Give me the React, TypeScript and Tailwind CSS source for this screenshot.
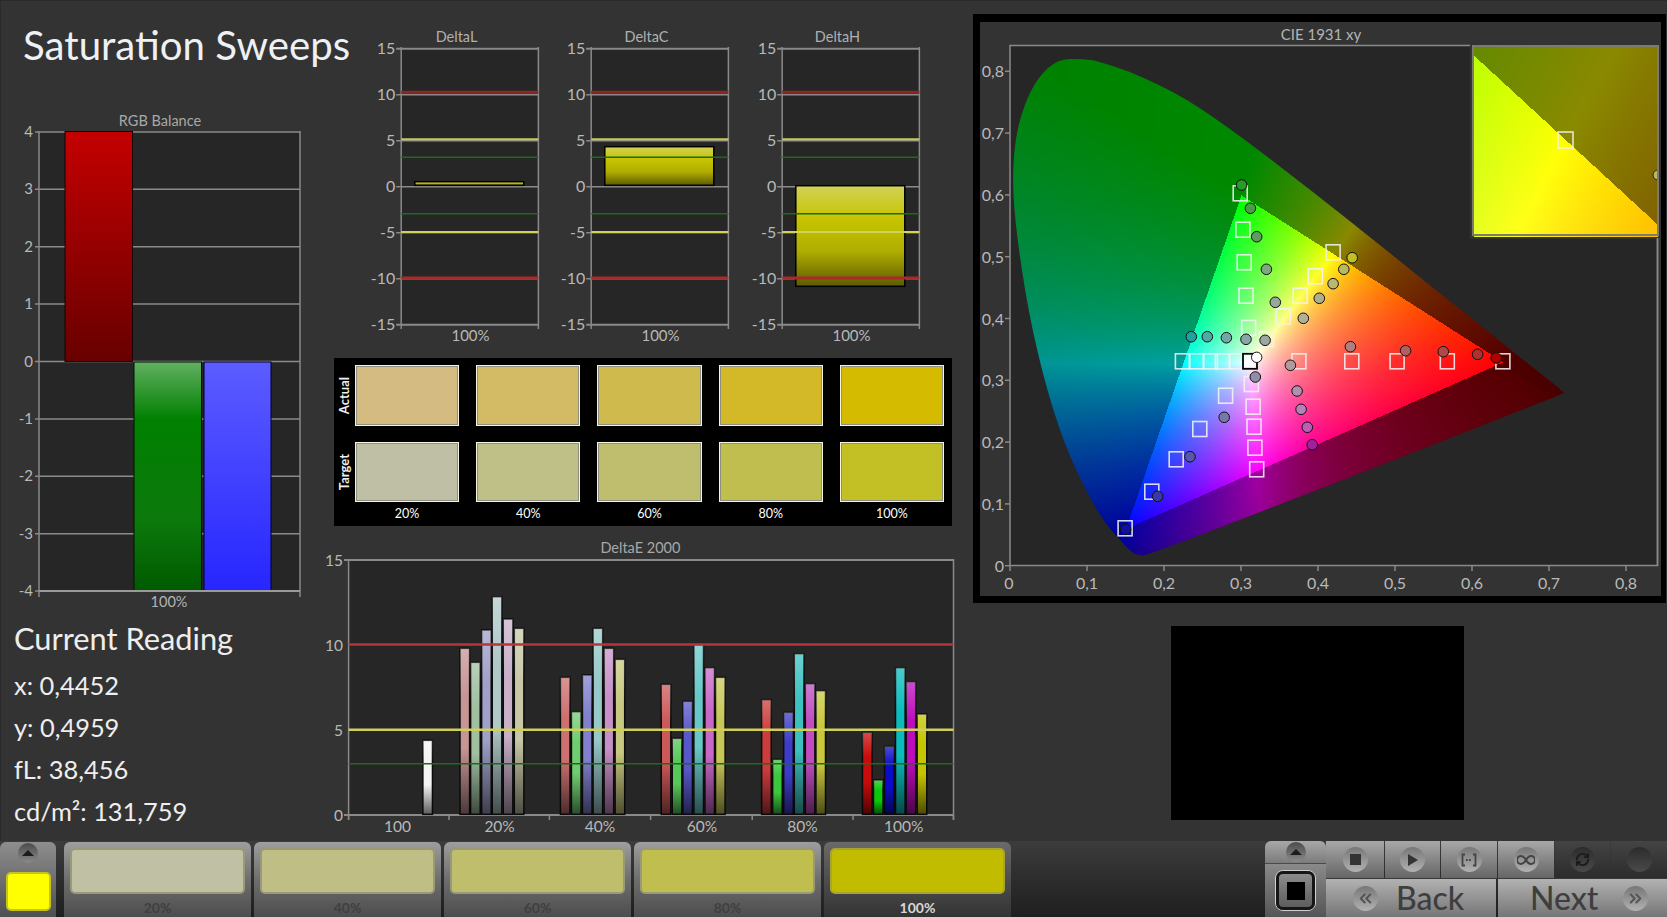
import React, { useEffect, useRef } from "react";
import { ChevronsLeft, ChevronsRight, RefreshCw } from "lucide-react";

const GRID = "#8a8a8a";
const LABEL = "#b9b9b9";

function Shade({ id }: { id: string }) {
  return (
    <linearGradient id={id} x1="0" y1="0" x2="0" y2="1">
      <stop offset="0" stopColor="#fff" stopOpacity="0.26" />
      <stop offset="0.3" stopColor="#fff" stopOpacity="0" />
      <stop offset="0.6" stopColor="#000" stopOpacity="0" />
      <stop offset="1" stopColor="#000" stopOpacity="0.62" />
    </linearGradient>
  );
}

function RgbChart() {
  const ys = [4, 3, 2, 1, 0, -1, -2, -3, -4];
  const yOf = (v: number) => 361.5 - v * 57.4;
  return (
    <svg className="block shrink-0" width="334" height="498" viewBox="0 112 334 498">
      <defs>
        <linearGradient id="rgbR" x1="0" y1="0" x2="0" y2="1">
          <stop offset="0" stopColor="#c40000" />
          <stop offset="1" stopColor="#680000" />
        </linearGradient>
        <linearGradient id="rgbG" x1="0" y1="0" x2="0" y2="1">
          <stop offset="0" stopColor="#62b062" />
          <stop offset="0.25" stopColor="#008000" />
          <stop offset="0.7" stopColor="#0c780c" />
          <stop offset="1" stopColor="#005a00" />
        </linearGradient>
        <linearGradient id="rgbB" x1="0" y1="0" x2="0" y2="1">
          <stop offset="0" stopColor="#5c5cff" />
          <stop offset="1" stopColor="#2626ff" />
        </linearGradient>
      </defs>
      <text x="160" y="125.5" textAnchor="middle" fontSize="14.5" fill="#a8a8a8">RGB Balance</text>
      <rect x="39" y="131.5" width="261" height="459.5" fill="#262626" />
      {ys.map((v) => (
        <g key={v}>
          <line x1="35" x2="300" y1={yOf(v)} y2={yOf(v)} stroke={GRID} strokeWidth="1.5" />
          <text x="33" y={yOf(v) + 5} textAnchor="end" fontSize="15" fill={LABEL}>{v}</text>
        </g>
      ))}
      <line x1="39" x2="39" y1="131" y2="597" stroke={GRID} strokeWidth="1.5" />
      <line x1="300" x2="300" y1="131" y2="597" stroke={GRID} strokeWidth="1.5" />
      <rect x="65" y="131.5" width="67.5" height="230" fill="url(#rgbR)" stroke="#1a0000" />
      <rect x="134" y="362" width="67.5" height="229" fill="url(#rgbG)" stroke="#001000" />
      <rect x="204" y="362" width="67" height="229" fill="url(#rgbB)" stroke="#000020" />
      <line x1="39" x2="300" y1="591" y2="591" stroke="#9a9a9a" strokeWidth="2" />
      <text x="169" y="607" textAnchor="middle" fontSize="14.5" fill="#b4b4b4">100%</text>
    </svg>
  );
}

function DeltaChart({ title, bar, id }: { title: string; bar: [number, number]; id: string }) {
  const L = 46.2;
  const R = 183.4;
  const ys = [15, 10, 5, 0, -5, -10, -15];
  const yOf = (v: number) => 186.7 - v * 9.2;
  return (
    <svg className="block shrink-0" width="190.4" height="325" viewBox="0 25 190.4 325">
      <defs>
        <linearGradient id={id} x1="0" y1="0" x2="0" y2="1">
          <stop offset="0" stopColor="#d2d258" />
          <stop offset="0.33" stopColor="#c6c400" />
          <stop offset="0.65" stopColor="#b0ae00" />
          <stop offset="1" stopColor="#5c5a00" />
        </linearGradient>
      </defs>
      <text x="101.5" y="42.5" textAnchor="middle" fontSize="14.5" fill="#b0b0b0">{title}</text>
      <rect x={L} y="47.7" width={R - L} height="276" fill="#262626" />
      {ys.map((v) => (
        <g key={v}>
          <line x1={L - 5} x2={R} y1={yOf(v)} y2={yOf(v)} stroke={GRID} strokeWidth={v === 15 || v === -15 ? 2 : 1.5} />
          <text x={L - 6} y={yOf(v) + 5} textAnchor="end" fontSize="16" fill={LABEL}>{v}</text>
        </g>
      ))}
      <line x1={L} x2={L} y1="47" y2="329" stroke={GRID} strokeWidth="1.5" />
      <line x1={R} x2={R} y1="47" y2="329" stroke={GRID} strokeWidth="1.5" />
      <rect x={L + 13.6} y={bar[0]} width="109" height={bar[1] - bar[0]} fill={`url(#${id})`} stroke="#000" strokeWidth="1.5" />
      <line x1={L} x2={R} y1="92.3" y2="92.3" stroke="#8f2626" strokeWidth="3" />
      <line x1={L} x2={R} y1="278" y2="278" stroke="#a82a2a" strokeWidth="3" />
      <line x1={L} x2={R} y1="139.3" y2="139.3" stroke="#c8c85a" strokeWidth="2" />
      <line x1={L} x2={R} y1="232" y2="232" stroke="#d2d25a" strokeWidth="2" />
      <line x1={L} x2={R} y1="157.3" y2="157.3" stroke="#1d6a1d" strokeWidth="1.5" />
      <line x1={L} x2={R} y1="213.7" y2="213.7" stroke="#1d6a1d" strokeWidth="1.5" />
      <text x="115.5" y="341.5" textAnchor="middle" fontSize="15" fill="#b9b9b9">100%</text>
    </svg>
  );
}

const actual = ["#d4bb82", "#d3bb66", "#cfba4e", "#d3b928", "#d4bb00"];
const target = ["#bfbfa5", "#bfbf88", "#bfbe6e", "#bfbe4e", "#c2c024"];
const pcts = ["20%", "40%", "60%", "80%", "100%"];

function SwatchCell({ c }: { c: string }) {
  return (
    <div className="h-full border border-[#f4f4e0] bg-[#8f8f80] p-px">
      <div className="h-full w-full" style={{ backgroundColor: c }} />
    </div>
  );
}

function SwatchPanel() {
  return (
    <div className="mt-2 flex h-[168px] w-[618px] bg-black pt-[7px]">
      <div className="flex w-[21px] shrink-0 flex-col text-[13px] font-bold text-[#eeeeee]">
        <div className="flex h-[61px] items-center justify-center">
          <span className="rotate-180 [writing-mode:vertical-rl]">Actual</span>
        </div>
        <div className="mt-4 flex h-[60px] items-center justify-center">
          <span className="rotate-180 [writing-mode:vertical-rl]">Target</span>
        </div>
      </div>
      <div className="grid w-[589px] grid-cols-5 grid-rows-[61px_60px_auto] gap-x-[17px] gap-y-4">
        {actual.map((c) => <SwatchCell key={c} c={c} />)}
        {target.map((c) => <SwatchCell key={c} c={c} />)}
        {pcts.map((p) => (
          <div key={p} className="-mt-[13px] text-center text-[12.5px] text-white">{p}</div>
        ))}
      </div>
    </div>
  );
}

const groups: { lab: string; lx: number; xs: number[]; tops: number[]; cols: string[] }[] = [
  { lab: "100", lx: 190, xs: [252], tops: [601], cols: ["#f4f4f4"] },
  { lab: "20%", lx: 440, xs: [343, 369, 396, 422, 449, 476], tops: [325, 367, 270, 170, 237, 265], cols: ["#c89494", "#a0c0a0", "#a0a0c8", "#b0c8c8", "#c8b0c8", "#c8c8a8"] },
  { lab: "40%", lx: 686, xs: [589, 616, 643, 669, 696, 723], tops: [412, 515, 405, 265, 325, 358], cols: ["#cc7070", "#70cc70", "#8080cc", "#98c8c8", "#c890c8", "#c8c880"] },
  { lab: "60%", lx: 936, xs: [836, 863, 889, 916, 943, 969], tops: [433, 595, 484, 314, 383, 412], cols: ["#cc5858", "#58c858", "#5858c8", "#68c8c8", "#c868c8", "#c8c858"] },
  { lab: "80%", lx: 1182, xs: [1082, 1109, 1136, 1162, 1189, 1215], tops: [479, 658, 517, 341, 431, 452], cols: ["#cc3c3c", "#3cc83c", "#3c3cc8", "#3cc0c0", "#c04cc0", "#c8c83c"] },
  { lab: "100%", lx: 1430, xs: [1329, 1356, 1383, 1410, 1436, 1463], tops: [577, 720, 619, 383, 425, 522], cols: ["#c80c0c", "#0cc80c", "#0c0cc8", "#0cbcbc", "#bc0cbc", "#c4c400"] },
];
const zx = (v: number) => 320 + v / 2.45;
const zy = (v: number) => 540 + v / 3;

function DeltaEChart() {
  const ys = [15, 10, 5, 0];
  const yOf = (v: number) => 815 - v * 17;
  const ticks = [70, 316, 562, 810, 1059, 1306, 1552];
  return (
    <svg className="mt-2 -ml-[14px] block shrink-0" width="653" height="307" viewBox="320 534 653 307">
      <defs><Shade id="deShade" /></defs>
      <text x="640.4" y="552.5" textAnchor="middle" fontSize="14.5" fill="#a8a8a8">DeltaE 2000</text>
      <rect x="348.6" y="559.5" width="605" height="255" fill="#262626" />
      {ys.map((v) => (
        <g key={v}>
          <line x1="344" x2="953.5" y1={yOf(v)} y2={yOf(v)} stroke={v === 10 || v === 5 ? "#26262600" : GRID} strokeWidth="2" />
          <text x="343" y={yOf(v) + 5.5} textAnchor="end" fontSize="15.5" fill={LABEL}>{v}</text>
        </g>
      ))}
      <line x1="348.6" x2="348.6" y1="559" y2="820" stroke={GRID} strokeWidth="1.5" />
      <line x1="953.5" x2="953.5" y1="559" y2="820" stroke={GRID} strokeWidth="1.5" />
      {ticks.map((t) => <line key={t} x1={zx(t)} x2={zx(t)} y1="815" y2="820" stroke={GRID} strokeWidth="1.5" />)}
      {groups.map((g) => (
        <g key={g.lab}>
          {g.xs.map((x, i) => (
            <g key={x}>
              <rect x={zx(x)} y={zy(g.tops[i])} width="9.6" height={zy(823) - zy(g.tops[i])} fill={g.cols[i]} stroke="#0c0c0c" strokeWidth="1.5" />
              <rect x={zx(x)} y={zy(g.tops[i])} width="9.6" height={zy(823) - zy(g.tops[i])} fill="url(#deShade)" />
            </g>
          ))}
          <text x={zx(g.lx)} y="831.5" textAnchor="middle" fontSize="15.5" fill={LABEL}>{g.lab}</text>
        </g>
      ))}
      <line x1="348.6" x2="953.5" y1="644.5" y2="644.5" stroke="#b8343a" strokeWidth="2.5" />
      <line x1="348.6" x2="953.5" y1="729.7" y2="729.7" stroke="#cfcf5a" strokeWidth="2.5" />
      <line x1="348.6" x2="953.5" y1="763.7" y2="763.7" stroke="#1d6a1d" strokeWidth="1.5" />
    </svg>
  );
}

const LOCUS: [number, number][] = [
  [0.182, 0.017], [0.165, 0.017], [0.156, 0.024], [0.144, 0.0407], [0.1241, 0.0678], [0.1096, 0.0968], [0.0913, 0.1397], [0.0687, 0.2037], [0.0454, 0.295], [0.0235, 0.4127], [0.0082, 0.5384],
  [0.003, 0.62], [0.0065, 0.69], [0.018, 0.745], [0.036, 0.79], [0.062, 0.82], [0.097, 0.82], [0.1142, 0.8162], [0.1547, 0.7999], [0.1929, 0.7786], [0.2296, 0.7543], [0.2658, 0.7243], [0.3016, 0.6923], [0.3373, 0.6589],
  [0.3731, 0.6245], [0.4087, 0.5896], [0.4441, 0.5547], [0.4788, 0.5202], [0.5125, 0.4866], [0.5448, 0.4544], [0.5752, 0.4242], [0.6029, 0.3965], [0.627, 0.3725], [0.6658, 0.334], [0.7, 0.3], [0.72, 0.28], [0.72, 0.28], [0.71, 0.274],
];

function chroma(x: number, y: number): [number, number, number] {
  const X = x / y;
  const Z = (1 - x - y) / y;
  let r = 3.2406 * X - 1.5372 - 0.4986 * Z;
  let g = -0.9689 * X + 1.8758 + 0.0415 * Z;
  let b = 0.0557 * X - 0.204 + 1.057 * Z;
  const minC = Math.min(r, g, b);
  const inside = minC >= 0;
  r = Math.max(r, 0);
  g = Math.max(g, 0);
  b = Math.max(b, 0);
  const m = Math.max(r, g, b) || 1;
  const gam = 0.88;
  let f = 1;
  if (!inside) {
    f = 0.54 + 0.09 * (b / m);
    f -= 0.12 * Math.min(1, Math.max(0, -minC * 0.18));
    if (r >= g && r >= b) {
      const ratio = Math.pow(Math.max(g, b) / r, 0.5);
      f -= 0.24 * (1 - ratio);
    }
  }
  return [Math.pow(r / m, gam) * 255 * f, Math.pow(g / m, gam) * 255 * f, Math.pow(b / m, gam) * 255 * f];
}

function paint(ref: HTMLCanvasElement | null, fx: (i: number) => number, fy: (j: number) => number, clip: boolean) {
  if (!ref) return;
  const w = ref.width;
  const h = ref.height;
  const off = document.createElement("canvas");
  off.width = w;
  off.height = h;
  const oc = off.getContext("2d")!;
  const data = oc.createImageData(w, h);
  for (let j = 0; j < h; j++) {
    for (let i = 0; i < w; i++) {
      const [r, g, b] = chroma(fx(i), Math.max(0.001, fy(j)));
      const k = (j * w + i) * 4;
      data.data[k] = r;
      data.data[k + 1] = g;
      data.data[k + 2] = b;
      data.data[k + 3] = 255;
    }
  }
  oc.putImageData(data, 0, 0);
  const ctx = ref.getContext("2d")!;
  ctx.save();
  if (clip) {
    const P = LOCUS.map(([x, y]) => [x * 770, 520.7 - y * 618]);
    ctx.beginPath();
    ctx.moveTo((P[0][0] + P[P.length - 1][0]) / 2, (P[0][1] + P[P.length - 1][1]) / 2);
    P.forEach((p, n) => {
      const q = P[(n + 1) % P.length];
      ctx.quadraticCurveTo(p[0], p[1], (p[0] + q[0]) / 2, (p[1] + q[1]) / 2);
    });
    ctx.closePath();
    ctx.clip();
  }
  ctx.drawImage(off, 0, 0);
  ctx.restore();
}

const SQ: [number, number][] = [
  [1240.2, 193.3], [1242.9, 229.7], [1244.2, 262.3], [1246, 295.7], [1248.7, 328],
  [1333.1, 252.3], [1315.3, 276.3], [1300.2, 295.7], [1283.3, 316.3], [1266.4, 339.3],
  [1182.4, 361.3], [1196.7, 361.3], [1210.4, 361.3], [1222.4, 361.3], [1236.7, 361.3],
  [1298.9, 361.3], [1351.8, 361.3], [1397.1, 361.3], [1447.3, 361.3], [1502.9, 361.3],
  [1251.3, 384], [1253.1, 406.7], [1254, 426.7], [1254.9, 447.7], [1256.7, 469.3],
  [1225.6, 395.7], [1199.8, 429], [1176.2, 459.3], [1151.8, 491.7], [1125.1, 528.3],
];
const CI: [number, number, string][] = [
  [1241.6, 185, "#2a9a2a"], [1250.4, 208.3, "#4a9a4a"], [1256.7, 236.7, "#609a60"], [1266.4, 269.3, "#80a880"], [1275.3, 302.3, "#98a898"],
  [1352.2, 257.7, "#c0c020"], [1343.8, 269.3, "#b8b860"], [1333.1, 283.7, "#b8b870"], [1319.3, 298.3, "#b0b088"], [1303.3, 318.3, "#b0b098"],
  [1191.3, 336.7, "#20a0a0"], [1207.3, 336.7, "#50a8a8"], [1226.4, 337.7, "#70a8a8"], [1246, 339.3, "#88a8a8"], [1265.1, 340.3, "#9aa8a0"],
  [1290.4, 365.3, "#b09aa0"], [1350.4, 346.7, "#b08080"], [1405.6, 350.7, "#b06060"], [1443.3, 351.7, "#b04848"], [1477.6, 354.3, "#b03030"], [1496.2, 358, "#b00000"],
  [1255.3, 377, "#8f8fa8"], [1297.1, 391, "#b090b0"], [1301.1, 409.3, "#b880b8"], [1307.3, 427.3, "#b860b8"], [1312.2, 444.7, "#a020a0"],
  [1224.2, 417.3, "#7878a8"], [1190, 456.7, "#5858a8"], [1157.6, 496.3, "#3838a8"], [1125.6, 529.3, "#1010a0"],
];

function CieChart() {
  const main = useRef<HTMLCanvasElement>(null);
  const inset = useRef<HTMLCanvasElement>(null);
  useEffect(() => {
    paint(main.current, (i) => i / 770, (j) => (520.7 - j) / 618, true);
    paint(inset.current, (i) => 0.4195 + (i - 92) / 3680, (j) => 0.5047 - (j - 95) / 4264, false);
  }, []);
  const xt = [0, 1, 2, 3, 4, 5, 6, 7, 8];
  return (
    <svg className="block" width="681" height="574" viewBox="980 22 681 574">
      <defs>
        <clipPath id="insetClip"><rect x="1474" y="47" width="184" height="187" /></clipPath>
      </defs>
      <text x="1321" y="40" textAnchor="middle" fontSize="15" fill="#b4b4b4">CIE 1931 xy</text>
      <rect x="1010" y="45.5" width="647.5" height="520" fill="#262626" stroke={GRID} strokeWidth="1.5" />
      {xt.map((v) => {
        const x = 1010 + v * 77;
        return (
          <g key={v}>
            <line x1={x} x2={x} y1="565" y2="571" stroke={GRID} strokeWidth="1.5" />
            <text x={v === 0 ? x - 1 : x} y="589" textAnchor="middle" fontSize="16" fill={LABEL}>{v === 0 ? "0" : `0,${v}`}</text>
          </g>
        );
      })}
      {xt.map((v) => {
        const y = 565.7 - v * 61.8;
        return (
          <g key={v}>
            <line x1="1005" x2="1010" y1={y} y2={y} stroke={GRID} strokeWidth="1.5" />
            <text x="1004" y={y + 6} textAnchor="end" fontSize="16" fill={LABEL}>{v === 0 ? "0" : `0,${v}`}</text>
          </g>
        );
      })}
      <foreignObject x="1010" y="45" width="648" height="521">
        <canvas ref={main} width={648} height={521} className="block" />
      </foreignObject>
      {SQ.map(([x, y], i) => (
        <rect key={i} x={x - 7} y={y - 7.5} width="14" height="15" fill="none" stroke="#f2f2f2" strokeOpacity="0.88" strokeWidth="1.6" />
      ))}
      {CI.map(([x, y, c], i) => (
        <ellipse key={i} cx={x} cy={y} rx="5.3" ry="5.3" fill={c} stroke="#111" strokeWidth="1" />
      ))}
      <rect x="1243" y="353.8" width="14" height="15" fill="#ffffff" fillOpacity="0.7" stroke="#000" strokeWidth="1.8" />
      <ellipse cx="1256.7" cy="357.3" rx="5.2" ry="5.2" fill="#fff" stroke="#111" strokeWidth="1" />
      <rect x="1470" y="43" width="197" height="196" fill="#333333" />
      <foreignObject x="1474" y="47" width="184" height="190">
        <canvas ref={inset} width={184} height={190} className="block" />
      </foreignObject>
      <g clipPath="url(#insetClip)">
        <circle cx="1658" cy="175" r="5" fill="#b8b860" stroke="#222" strokeWidth="1" />
      </g>
      <rect x="1558" y="132" width="15" height="16" fill="none" stroke="#f2f2f2" strokeOpacity="0.88" strokeWidth="1.6" />
      <rect x="1473" y="46" width="185" height="189" fill="none" stroke="#7c7c6e" strokeWidth="2" />
      <line x1="1657.5" x2="1657.5" y1="238" y2="566" stroke={GRID} strokeWidth="1.5" />
    </svg>
  );
}

function Tile({ c, label, active }: { c: string; label: string; active?: boolean }) {
  return (
    <div className={`h-[75px] w-[187px] shrink-0 rounded-t-[6px] bg-linear-to-b px-[6px] pt-[6px] ${active ? "from-[#6a6a6a] to-[#333333]" : "from-[#9e9e9e] via-[#6e6e6e] to-[#4d4d4d]"}`}>
      <div
        className={`h-[46px] rounded-[5px] border-2 ${active ? "border-[#a8a430]" : "border-[#9a9a78]"}`}
        style={{ backgroundColor: c }}
      />
      <div className={`mt-[5px] text-center text-[14px] leading-[18px] font-bold ${active ? "text-[#d8d8d8]" : "text-[#404040]"}`}>{label}</div>
    </div>
  );
}

function UpButton() {
  return (
    <div className="flex h-[20px] w-[20px] items-center justify-center rounded-full bg-linear-to-b from-[#4c4c4c] to-[#8a8a8a]">
      <div className="h-0 w-0 border-x-[6px] border-b-[6px] border-x-transparent border-b-[#1c1c1c]" />
    </div>
  );
}

function Round({ children, dark }: { children?: React.ReactNode; dark?: boolean }) {
  return (
    <div className={`flex h-[25px] w-[25px] items-center justify-center rounded-full bg-linear-to-b ${dark ? "from-[#2c2c2c] to-[#4a4a4a]" : "from-[#777777] to-[#b2b2b2]"}`}>
      {children}
    </div>
  );
}

function Cell({ children, w, dark, round = true }: { children?: React.ReactNode; w: string; dark?: boolean; round?: boolean }) {
  return (
    <div className={`flex h-full items-center justify-center bg-linear-to-b ${w} ${dark ? "from-[#444444] to-[#2c2c2c]" : "from-[#a8a8a8] to-[#666666]"}`}>
      {round ? <Round dark={dark}>{children}</Round> : children}
    </div>
  );
}

function Controls() {
  return (
    <div className="flex h-[76px] w-[402px] shrink-0">
      <div className="flex h-full w-[61px] shrink-0 flex-col overflow-hidden rounded-t-[6px]">
        <div className="flex h-[23px] items-center justify-center border-b border-[#4a4a4a] bg-linear-to-b from-[#a8a8a8] to-[#7c7c7c]"><UpButton /></div>
        <div className="flex flex-1 items-center justify-center bg-linear-to-b from-[#8a8a8a] to-[#555555]">
          <div className="rounded-[8px] border border-[#d0d0d0] p-0">
            <div className="flex h-[39px] w-[39px] items-center justify-center rounded-[7px] border-[3px] border-[#161616] bg-linear-to-b from-[#8c8c8c] to-[#5e5e5e]">
              <div className="h-[18px] w-[18px] bg-black" />
            </div>
          </div>
        </div>
      </div>
      <div className="flex flex-1 flex-col">
        <div className="flex h-[38px] gap-px border-b border-[#3a3a3a]">
          <Cell w="w-[58px]"><div className="h-[11px] w-[11px] bg-[#333333]" /></Cell>
          <Cell w="w-[55px]">
            <svg width="12" height="14" viewBox="0 0 12 14"><path d="M1 1 L11 7 L1 13 Z" fill="#333333" /></svg>
          </Cell>
          <Cell w="w-[56px]">
            <svg width="16" height="14" viewBox="0 0 16 14" fill="none" stroke="#444444" strokeWidth="1.8">
              <path d="M4 1.5 H1.5 V12.5 H4" />
              <path d="M12 1.5 H14.5 V12.5 H12" />
              <path d="M5 7 H11" strokeDasharray="1.8 1.2" />
            </svg>
          </Cell>
          <Cell w="w-[56px]">
            <svg width="18" height="10" viewBox="0 0 18 10" fill="none" stroke="#444444" strokeWidth="2">
              <path d="M9 5 C7 1.5 5.5 1 4 1 A4 4 0 0 0 4 9 C5.5 9 7 8.5 9 5 C11 1.5 12.5 1 14 1 A4 4 0 0 1 14 9 C12.5 9 11 8.5 9 5 Z" />
            </svg>
          </Cell>
          <Cell w="w-[55px]" dark><RefreshCw size={15} strokeWidth={3} color="#1c1c1c" /></Cell>
          <Cell w="flex-1" dark />
        </div>
        <div className="flex flex-1 gap-[2px]">
          <div className="flex w-[170px] items-center bg-linear-to-b from-[#b2b2b2] to-[#767676] pl-[27px]">
            <Round><ChevronsLeft size={19} strokeWidth={2.6} color="#555555" /></Round>
            <span className="ml-[18px] text-[32px] leading-none font-medium text-[#3e3e3e]">Back</span>
          </div>
          <div className="flex flex-1 items-center bg-linear-to-b from-[#b2b2b2] to-[#767676] pl-[32px]">
            <span className="text-[32px] leading-none font-medium text-[#3e3e3e]">Next</span>
            <div className="ml-[25px]"><Round><ChevronsRight size={19} strokeWidth={2.6} color="#555555" /></Round></div>
          </div>
        </div>
      </div>
    </div>
  );
}

function BottomBar() {
  return (
    <div className="flex h-[76px] bg-linear-to-b from-[#3c3c3c] to-[#1f1f1f]">
      <div className="mt-px flex h-[75px] w-[56px] shrink-0 flex-col items-center rounded-t-[6px] bg-linear-to-b from-[#8e8e8e] to-[#505050] pt-[1px]">
        <UpButton />
        <div className="mt-[9px] h-[39px] w-[45px] rounded-[5px] border-2 border-[#c4c420] bg-[#ffff00]" />
      </div>
      <div className="mt-px ml-2 flex gap-[3px]">
        <Tile c="#bfc0a4" label="20%" />
        <Tile c="#bfbf85" label="40%" />
        <Tile c="#bfbe6d" label="60%" />
        <Tile c="#bfbe4e" label="80%" />
        <Tile c="#c2bc00" label="100%" active />
      </div>
      <div className="flex-1" />
      <Controls />
    </div>
  );
}

export default function App() {
  const reading = ["x: 0,4452", "y: 0,4959", "fL: 38,456", "cd/m²: 131,759"];
  return (
    <div className="flex h-[917px] w-[1667px] flex-col overflow-hidden bg-[#333333] shadow-[inset_1px_1px_0_#2a2a2a] [font-family:Lato,'Open_Sans',sans-serif]">
      <div className="flex h-[841px]">
        <div className="w-[334px] shrink-0">
          <div className="flex h-[112px] items-start pt-[19px] pl-[23px]">
            <h1 className="text-[40.2px] leading-[52px] font-normal whitespace-nowrap text-[#eef1f4]">Saturation Sweeps</h1>
          </div>
          <RgbChart />
          <div className="pt-2 pl-[14px] text-[#eeeeee]">
            <div className="mb-1 text-[30.8px] leading-[42px]">Current Reading</div>
            {reading.map((r) => (
              <div key={r} className="text-[25.4px] leading-[42px]">{r}</div>
            ))}
          </div>
        </div>
        <div className="w-[639px] shrink-0">
          <div className="mt-[25px] ml-[21px] flex h-[325px]">
            <DeltaChart id="dl" title="DeltaL" bar={[181.7, 185.3]} />
            <DeltaChart id="dc" title="DeltaC" bar={[146.7, 185.3]} />
            <DeltaChart id="dh" title="DeltaH" bar={[185.7, 286.3]} />
          </div>
          <SwatchPanel />
          <DeltaEChart />
        </div>
        <div className="flex-1 pt-[14px]">
          <div className="w-[693px] border-t-[8px] border-r-[5px] border-b-[7px] border-l-[7px] border-black bg-[#333333]">
            <CieChart />
          </div>
          <div className="mt-[23px] ml-[198px] h-[194px] w-[293px] bg-black" />
        </div>
      </div>
      <BottomBar />
    </div>
  );
}
